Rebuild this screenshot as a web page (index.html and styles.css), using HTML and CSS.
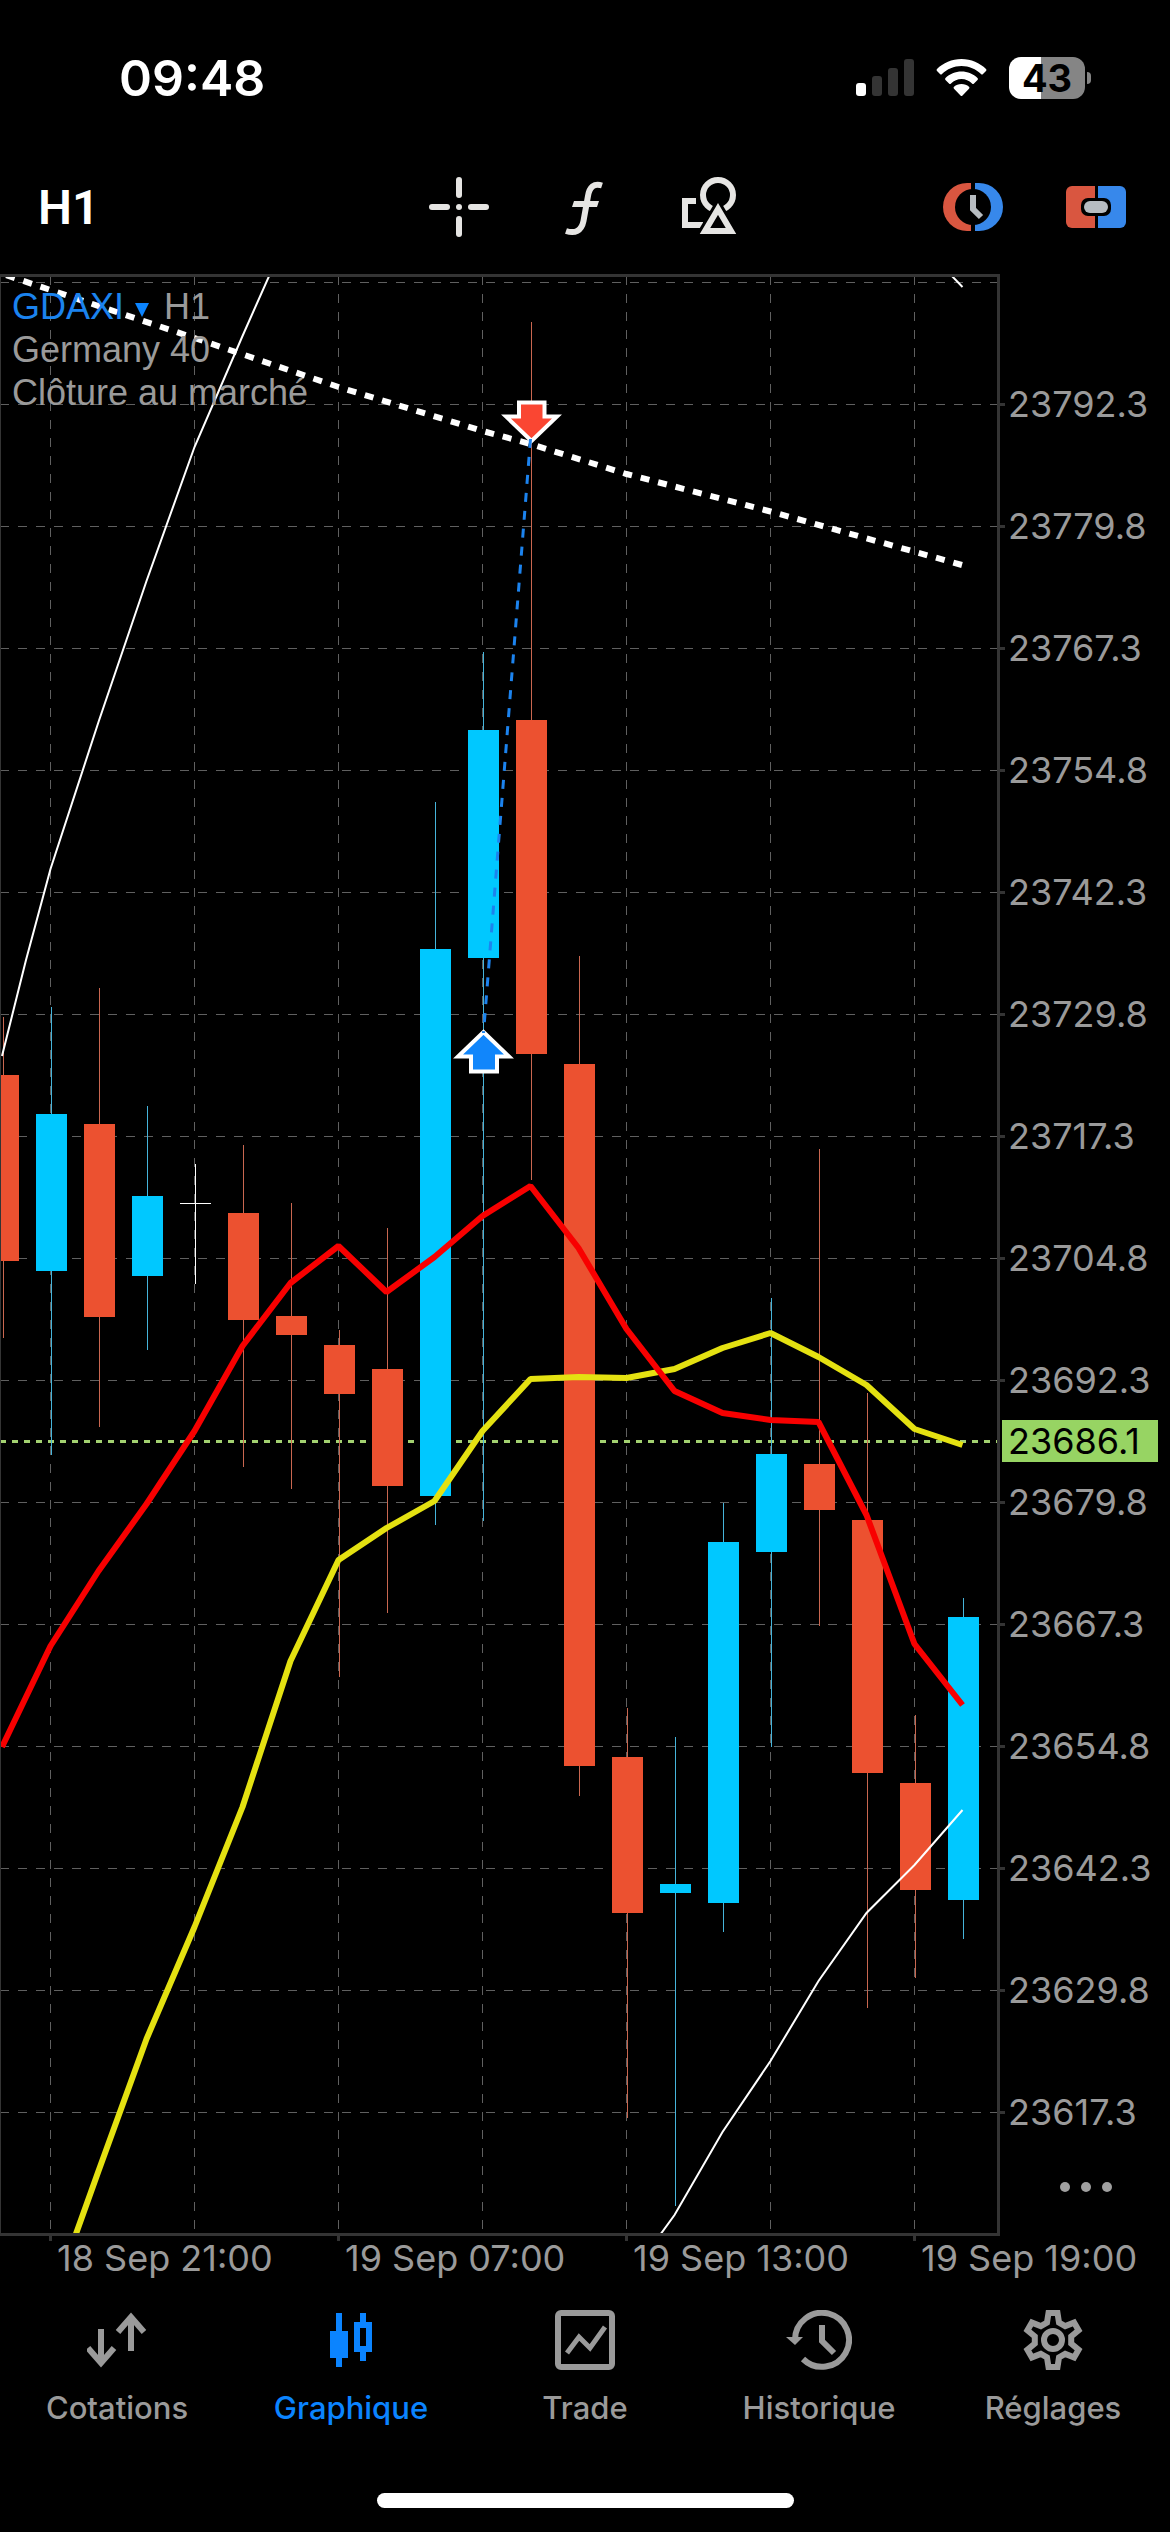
FILE: index.html
```html
<!DOCTYPE html>
<html lang="fr">
<head>
<meta charset="utf-8">
<meta name="viewport" content="width=device-width, initial-scale=1">
<title>GDAXI H1</title>
<link rel="stylesheet" href="styles.css">
</head>
<body>
<header>
  <div class="status">
    <time class="clock">09:48</time>
    <div class="status-icons">
      <svg width="58" height="38" viewBox="0 0 58 38" aria-label="Signal">
        <rect x="0" y="24" width="10" height="13" rx="3" fill="#fff"/>
        <g fill="#343434"><rect x="16" y="17" width="10" height="20" rx="3"/><rect x="32" y="9" width="10" height="28" rx="3"/><rect x="48" y="0" width="10" height="37" rx="3"/></g>
      </svg>
      <svg width="51" height="38" viewBox="0 0 51 38" aria-label="Wi-Fi">
        <g fill="#fff">
          <path d="M25.500 0C35 0 44 4 50 10q1 1 0 2l-3 3q-1 1-2 0C40 10 33 7 25.500 7S11 10 6 15q-1 1-2 0l-3-3q-1-1 0-2C7 4 16 0 25.500 0z"/>
          <path d="M25.500 12.500c6 0 12 2.500 16 6.500q1 1 0 2l-3.500 3.500q-1 1-2 0c-3-3-6.500-4.500-10.500-4.500s-7.500 1.500-10.500 4.500q-1 1-2 0L9.500 21q-1-1 0-2c4-4 10-6.500 16-6.500z"/>
          <path d="M25.500 25c3 0 5.500 1 7.500 2.800q1 1 0 2L26.500 36.500q-1 1-2 0L18 29.800q-1-1 0-2C20 26 22.500 25 25.500 25z"/>
        </g>
      </svg>
      <div class="battery" role="img" aria-label="Batterie 43 %"><span>43</span></div>
    </div>
  </div>
  <div class="toolbar">
    <button class="period" type="button">H1</button>
    <div class="tools">
      <button type="button" aria-label="Réticule"><svg width="60" height="60" viewBox="0 0 60 60" fill="#e6e5e3"><rect x="27" y="0" width="6" height="21" rx="3"/><rect x="27" y="39" width="6" height="21" rx="3"/><rect x="0" y="27" width="21" height="6" rx="3"/><rect x="39" y="27" width="21" height="6" rx="3"/><circle cx="30" cy="30" r="3"/></svg></button>
      <button type="button" aria-label="Indicateurs"><svg width="60" height="60" viewBox="0 0 60 60" fill="none" stroke="#e6e5e3" stroke-width="6"><path d="M48 8.500C40 6 35.500 10 34 19L29.500 44C27.500 54 21 57 12 54"/><path d="M20 24H45L43 30H18z" fill="#e6e5e3" stroke="none"/></svg></button>
      <button type="button" aria-label="Objets"><svg width="60" height="60" viewBox="0 0 60 60" fill="none" stroke="#e6e5e3" stroke-width="6"><path d="M17 24H6V48H24"/><circle cx="39" cy="18" r="22" fill="#000" stroke="none"/><circle cx="39" cy="18" r="15"/><path d="M39 32L26 54H52z" fill="#000" stroke="#000" stroke-width="12"/><path d="M39 32L26 54H52z"/></svg></button>
    </div>
    <div class="trade-tools">
      <button type="button" aria-label="Ordre en attente"><svg width="60" height="48" viewBox="0 0 60 48"><path d="M28 0H24A24 24 0 0 0 24 48H28z" fill="#d95640"/><path d="M32 0H36A24 24 0 0 1 36 48H32z" fill="#3788eb"/><circle cx="30" cy="24" r="18"/><path d="M30 12V26L38 34" fill="none" stroke="#b7bcc1" stroke-width="6"/></svg></button>
      <button type="button" aria-label="Trading en un clic"><svg width="60" height="42" viewBox="0 0 60 42"><path d="M29 0H6A6 6 0 0 0 0 6V36A6 6 0 0 0 6 42H29z" fill="#d95640"/><path d="M32 0H54A6 6 0 0 1 60 6V36A6 6 0 0 1 54 42H32z" fill="#3788eb"/><rect x="15" y="12" width="30" height="18" rx="7"/><rect x="18" y="15" width="24" height="12" rx="6" fill="#b7bcc1"/></svg></button>
    </div>
  </div>
</header>

<main class="chart">
  <svg class="plot" viewBox="0 270 1170 2016" role="img" aria-label="Graphique GDAXI H1">
    <defs><clipPath id="area"><rect x="0" y="277" width="997" height="1956"/></clipPath></defs>
    <g clip-path="url(#area)">
      <path class="grid" d="M0 282.500H997M0 404.500H997M0 526.500H997M0 648.500H997M0 770.500H997M0 892.500H997M0 1014.500H997M0 1136.500H997M0 1258.500H997M0 1380.500H997M0 1502.500H997M0 1624.500H997M0 1746.500H997M0 1868.500H997M0 1990.500H997M0 2112.500H997M50.500 276V2233M194.500 276V2233M338.500 276V2233M482.500 276V2233M626.500 276V2233M770.500 276V2233M914.500 276V2233"/>
      <path class="bid-line" d="M0 1441.500H997"/>
      <path class="wick down" d="M3.500 1017V1338M99.500 988V1427M243.500 1145V1467M291.500 1203V1489M339.500 1330V1677M387.500 1228V1613M531.500 322V1180M579.500 956V1796M627.500 1708V2118M819.500 1149V1626M867.500 1393V2008M915.500 1715V1978"/>
      <path class="wick up" d="M51.500 1007V1455M147.500 1106V1350M435.500 802V1525M483.500 652V1521M675.500 1737V2206M723.500 1503V1932M771.500 1298V1747M963.500 1598V1939"/>
      <path class="doji" d="M195.500 1164V1284M180 1203.500H211"/>
      <g class="body down">
        <rect x="-12" y="1075" width="31" height="186"/><rect x="84" y="1124" width="31" height="193"/><rect x="228" y="1213" width="31" height="107"/><rect x="276" y="1316" width="31" height="19"/><rect x="324" y="1345" width="31" height="49"/><rect x="372" y="1369" width="31" height="117"/><rect x="516" y="720" width="31" height="334"/><rect x="564" y="1064" width="31" height="702"/><rect x="612" y="1757" width="31" height="156"/><rect x="804" y="1464" width="31" height="46"/><rect x="852" y="1520" width="31" height="253"/><rect x="900" y="1783" width="31" height="107"/>
      </g>
      <g class="body up">
        <rect x="36" y="1114" width="31" height="157"/><rect x="132" y="1196" width="31" height="80"/><rect x="420" y="949" width="31" height="547"/><rect x="468" y="730" width="31" height="228"/><rect x="660" y="1884" width="31" height="9"/><rect x="708" y="1542" width="31" height="361"/><rect x="756" y="1454" width="31" height="98"/><rect x="948" y="1617" width="31" height="283"/>
      </g>
      <path class="trend" d="M962 565L770.500 511.500L626.500 474L530.500 444L482.500 431L338.500 387L194.500 338L50.500 290L2.500 274"/>
      <path class="band" d="M2 1056L26 960L50.500 869L98.500 722L146.500 581L194.500 447L242.500 336L270 274M950 274L962.500 287M660 2235L674.500 2215L722.500 2132L770.500 2061L818.500 1981L866.500 1913L914.500 1865L962.500 1810"/>
      <path class="average yellow" d="M50.500 2305L98.500 2171L146.500 2039L194.500 1927L242.500 1807L290.500 1661L338.500 1560L386.500 1528L434.500 1501L482.500 1431L530.500 1379L578.500 1377L626.500 1378L674.500 1369L722.500 1348L770.500 1333L818.500 1357L866.500 1385L914.500 1429L962.500 1445"/>
      <path class="average red" d="M2 1747L50.500 1646L98.500 1571L146.500 1504L194.500 1431L242.500 1346L290.500 1283L338.500 1246L386.500 1292L434.500 1257L482.500 1216L530.500 1186L578.500 1248L626.500 1329L674.500 1391L722.500 1413L770.500 1420L818.500 1422L866.500 1515L914.500 1644L962.500 1705"/>
      <path class="marker sell" d="M519 402.500H544.500V416.500H557L531.500 441L506 416.500H519z"/>
      <path class="marker buy" d="M483.500 1032L509 1056.500H497V1071.500H471V1056.500H458z"/>
      <path class="deal" d="M530.500 439L483.500 1033"/>
    </g>
    <path class="frame thin" d="M.5 277V2233"/>
    <path class="frame" d="M0 275.500H998.500V2234.500H0M1000 404.500H1005M1000 526.500H1005M1000 648.500H1005M1000 770.500H1005M1000 892.500H1005M1000 1014.500H1005M1000 1136.500H1005M1000 1258.500H1005M1000 1380.500H1005M1000 1502.500H1005M1000 1624.500H1005M1000 1746.500H1005M1000 1868.500H1005M1000 1990.500H1005M1000 2112.500H1005M50.500 2236V2241M338.500 2236V2241M626.500 2236V2241M914.500 2236V2241"/>
    <rect x="1002" y="1420" width="156" height="42" fill="#97d463"/>
    <g class="axis">
      <text x="1008" y="417">23792.3</text><text x="1008" y="539">23779.8</text><text x="1008" y="661">23767.3</text><text x="1008" y="783">23754.8</text><text x="1008" y="905">23742.3</text><text x="1008" y="1027">23729.8</text><text x="1008" y="1149">23717.3</text><text x="1008" y="1271">23704.8</text><text x="1008" y="1393">23692.3</text><text x="1008" y="1454" class="current">23686.1</text><text x="1008" y="1515">23679.8</text><text x="1008" y="1637">23667.3</text><text x="1008" y="1759">23654.8</text><text x="1008" y="1881">23642.3</text><text x="1008" y="2003">23629.8</text><text x="1008" y="2125">23617.3</text>
      <text x="57" y="2271">18 Sep 21:00</text><text x="345" y="2271">19 Sep 07:00</text><text x="633" y="2271">19 Sep 13:00</text><text x="921" y="2271">19 Sep 19:00</text>
    </g>
  </svg>
  <div class="legend">
    <p><button type="button" class="symbol">GDAXI <svg width="14" height="14" viewBox="0 0 14 14"><path d="M0 0H14L7 14z" fill="#0b84ff"/></svg></button> H1</p>
    <p>Germany 40</p>
    <p>Clôture au marché</p>
  </div>
  <button type="button" class="more" aria-label="Plus"><svg width="52" height="12" viewBox="0 0 52 12" fill="#a0a0a0"><circle cx="5" cy="6" r="5"/><circle cx="26" cy="6" r="5"/><circle cx="47" cy="6" r="5"/></svg></button>
</main>

<nav class="tabs">
  <a href="#cotations"><svg width="60" height="60" viewBox="0 0 60 60" fill="none" stroke="currentColor" stroke-width="6"><path d="M44 41V6M31 22L44 7L57 22M14 19V54M1 38L14 53L27 38"/></svg><span>Cotations</span></a>
  <a href="#graphique" class="active" aria-current="page"><svg width="60" height="60" viewBox="0 0 60 60" fill="currentColor"><path d="M15 3h6V21h6V48h-6v9h-6V48H9V21h6zM39 3h6v9h6V42h-6v9h-6V42h-6V12h6zM39 18V36h6V18z" fill-rule="evenodd"/></svg><span>Graphique</span></a>
  <a href="#trade"><svg width="60" height="60" viewBox="0 0 60 60" fill="none" stroke="currentColor" stroke-width="6"><rect x="3" y="3" width="54" height="54" rx="3"/><path d="M12 43L24 27L35 38L50 17" stroke-width="5"/></svg><span>Trade</span></a>
  <a href="#historique"><svg width="66" height="60" viewBox="-6 0 66 60" fill="none" stroke="currentColor" stroke-width="6"><path d="M3 30A27 27 0 1 1 11 49"/><path d="M-6 27H11L3 35z" fill="currentColor" stroke="none"/><path d="M30 15V31L42 43"/></svg><span>Historique</span></a>
  <a href="#reglages"><svg width="60" height="60" viewBox="-30 -30 60 60" fill="none" stroke="currentColor" stroke-width="6"><path d="M-4.500-27H4.500L6-17.500L12.200-13.900L21.100-17.400L25.600-9.600L18.200-3.600V3.600L25.600 9.600L21.100 17.400L12.200 13.900L6 17.500L4.500 27H-4.500L-6 17.500L-12.200 13.900L-21.100 17.400L-25.600 9.600L-18.200 3.600V-3.600L-25.600-9.600L-21.100-17.400L-12.200-13.900L-6-17.500z"/><circle r="9"/></svg><span>Réglages</span></a>
</nav>
<div class="home"></div>
</body>
</html>
```
FILE: styles.css
```css
* { box-sizing: border-box; }
body {
  margin: 0;
  background: #000;
  color: #fff;
  font-family: Inter, "Liberation Sans", sans-serif;
}
svg { display: block; }
p { margin: 0; }
button {
  padding: 0;
  border: 0;
  background: none;
  color: inherit;
  font: inherit;
}

/* status bar */
.status {
  display: flex;
  align-items: center;
  justify-content: space-between;
  height: 156px;
  padding: 0 79px 0 119px;
}
.clock { font-size: 50px; font-weight: 600; }
.status-icons { display: flex; align-items: center; gap: 22px; }
.battery {
  position: relative;
  width: 76px;
  margin-right: 6px;
  border-radius: 12px;
  background: linear-gradient(90deg, #fff 42%, #858585 42%);
  color: #000;
  font-size: 38px;
  font-weight: 700;
  line-height: 42px;
  text-align: center;
}
.battery::after {
  content: "";
  position: absolute;
  top: 15px;
  right: -6px;
  width: 4px;
  height: 12px;
  border-radius: 0 4px 4px 0;
  background: #858585;
}

/* toolbar */
.toolbar {
  display: grid;
  grid-template-columns: 1fr auto 1fr;
  align-items: center;
  height: 102px;
  padding: 0 44px 0 42px;
}
.period {
  justify-self: start;
  margin-left: -4px;
  font-family: Roboto, sans-serif;
  font-size: 48px;
  font-weight: 600;
}
.tools { display: flex; gap: 65px; }
.trade-tools { display: flex; align-items: center; justify-self: end; gap: 63px; }

/* chart */
.chart { position: relative; margin-top: 12px; }
.plot { width: 100%; height: auto; }
.plot path { fill: none; }
.plot .grid { stroke: #606060; stroke-dasharray: 9 9; }
.plot .frame { stroke: #343434; stroke-width: 3; }
.plot .frame.thin { stroke-width: 1; }
.bid-line { stroke: #a3d170; stroke-width: 3; stroke-dasharray: 6 6; }
.wick.up { stroke: #46b4da; }
.wick.down { stroke: #c96750; }
.body.up { fill: #00c8ff; }
.body.down { fill: #ec5130; }
.doji { stroke: #fff; }
.trend { stroke: #fff; stroke-width: 6; stroke-dasharray: 9 9; }
.band { stroke: #fff; stroke-width: 2; }
.average { stroke-width: 6; stroke-linejoin: bevel; }
.average.yellow { stroke: #e4e111; }
.average.red { stroke: #f80000; }
.deal { stroke: #1c83ee; stroke-width: 3; stroke-dasharray: 9 9; }
.plot .marker { stroke: #fff; stroke-width: 4; }
.plot .sell { fill: #fa4632; }
.plot .buy { fill: #1186fb; }
.axis { font-size: 36px; fill: #9a9a9a; }
.axis .current { fill: #000; }

.legend {
  position: absolute;
  top: 15px;
  left: 12px;
  color: #9a9a9a;
  font: 36px/43px "Liberation Sans", Arial, sans-serif;
}
.symbol { color: #1b83ee; }
.symbol svg { display: inline-block; margin: 0 5px 0 1px; vertical-align: 2px; }
.more { position: absolute; right: 58px; bottom: 93px; }

/* tab bar */
.tabs { display: grid; grid-template-columns: repeat(5, 1fr); padding-top: 24px; }
.tabs a {
  display: flex;
  flex-direction: column;
  align-items: center;
  gap: 20px;
  color: #9a9a9a;
  font-size: 31px;
  font-weight: 500;
  line-height: 36px;
  text-decoration: none;
}
.tabs .active { color: #0b84ff; }
.home {
  width: 417px;
  max-width: 60%;
  height: 15px;
  margin: 67px auto 24px;
  border-radius: 8px;
  background: #fff;
}
```
